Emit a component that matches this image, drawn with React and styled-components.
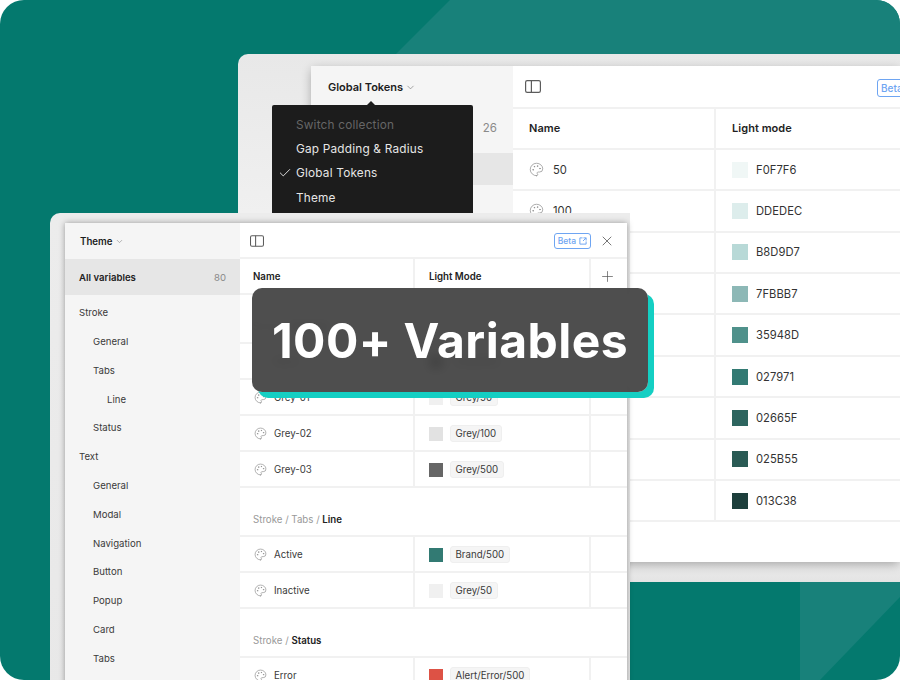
import React from "react";
import styled, { createGlobalStyle } from "styled-components";
import { Palette, ChevronDown, X, Plus, Check } from "lucide-react";

const Global = createGlobalStyle`
  html, body { margin: 0; padding: 0; background: #fff; }
  body { font-family: "Inter", "Liberation Sans", sans-serif; -webkit-font-smoothing: antialiased; }
  * { box-sizing: border-box; }
`;

const Hero = styled.div`
  position: relative; width: 900px; height: 680px; overflow: hidden;
  border-radius: 24px; background: #04796e;
`;
const Backdrop = styled.svg`position: absolute; inset: 0;`;

const BackWindow = styled.section`
  position: absolute; left: 238px; top: 54px; width: 662px; height: 528px;
  padding: 12px 0 20px 73px;
  border-radius: 10px 0 0 0;
  background-image: linear-gradient(to bottom, #e8e8e8, #f0f0f0 30%, #f0f0f0 94%, #e4e4e4);
`;
const BackPanel = styled.div`
  display: flex; height: 100%; background: #fff;
  box-shadow: 0 3px 10px -1px rgba(0,0,0,.32);
`;
const BackSide = styled.aside`
  width: 202px; flex: none; background: #f5f5f5;
`;
const SideHeader = styled.div`
  display: flex; align-items: center; gap: 2px;
  height: ${p => p.$h}px; padding-left: ${p => p.$pad}px;
  font-size: ${p => p.$size}px; font-weight: 600; color: #1c1c1c;
  svg { color: #777; margin-top: 1px; }
`;
const BackCountRow = styled.div`
  display: flex; justify-content: flex-end; align-items: center;
  height: 42px; padding-right: 16px; font-size: 11.5px; color: #8a8a8a;
`;
const BackSelected = styled.div`
  height: 32px; margin-top: 4px; background: #e6e6e6;
`;
const BackMain = styled.div`flex: 1; min-width: 0; overflow: hidden;`;
const TopBar = styled.div`
  display: flex; align-items: center; height: ${p => p.$h}px;
  padding: ${p => p.$top}px ${p => p.$right}px 0 ${p => p.$left}px;
  border-bottom: 2px solid #f1f1f1; color: #555;
`;
const Spacer = styled.div`flex: 1;`;

const BackBetaClip = styled.div`width: 23px; overflow: hidden; flex: none;`;
const Beta = styled.span`
  display: inline-flex; align-items: center; gap: 3px; flex: none;
  height: ${p => p.$h}px; padding: 0 3px; border: 1px solid #6ea5f2; border-radius: 3px;
  font-size: ${p => p.$size}px; font-weight: 500; color: #6ea5f2;
`;

const BackRow = styled.div`
  display: grid; grid-template-columns: 201px 1fr; height: 41.4px;
  border-bottom: 2px solid #f1f1f1;
  font-size: 11.2px; color: #333; letter-spacing: .05px;
`;
const BackCell = styled.div`
  display: flex; align-items: center; gap: 9px; padding-left: ${p => p.$pad}px;
  font-size: ${p => (p.$head ? "11px" : "inherit")};
  font-weight: ${p => (p.$head ? 600 : 400)}; color: ${p => (p.$head ? "#1f1f1f" : "#333")};
  & + & { border-left: 2px solid #f1f1f1; gap: 8px; }
  svg { color: #888; flex: none; }
`;
const Swatch = styled.span`
  width: ${p => p.$s}px; height: ${p => p.$s}px; flex: none; background: ${p => p.$c};
`;

const Menu = styled.div`
  position: absolute; left: 272px; top: 105px; width: 201px; height: 120px;
  padding-top: 7.5px; background: #1c1c1c; border-radius: 2px;
  font-size: 11.8px; letter-spacing: .2px; color: #e6e6e6;
  &::before {
    content: ""; position: absolute; left: 94px; top: -4px;
    border: 5px solid transparent; border-top: 0; border-bottom-color: #1c1c1c;
  }
`;
const MenuItem = styled.div`
  position: relative; display: flex; align-items: center; height: 24.3px; padding-left: 24px;
  color: ${p => (p.$muted ? "#666" : "#e6e6e6")};
  svg { position: absolute; left: 6px; top: 5px; }
`;

const FrontWindow = styled.section`
  position: absolute; left: 50px; top: 213px; width: 580px; height: 490px;
  padding: 10px 3px 0 15px; border-radius: 10px 0 0 0;
  background: linear-gradient(to bottom, #ececec, #e8e8e8);
`;
const FrontPanel = styled.div`
  display: flex; height: 100%; background: #fff;
  box-shadow: 0 0 6px rgba(0,0,0,.36);
`;
const FrontSide = styled.aside`
  width: 175px; flex: none; background: #f5f5f5; font-size: 9.6px; color: #3a3a3a;
`;
const AllRow = styled.div`
  display: flex; justify-content: space-between; align-items: center;
  height: 36px; padding: 0 14px; background: #e6e6e6;
  font-weight: 600; color: #222;
  span { font-weight: 400; color: #8a8a8a; }
`;
const Tree = styled.div`padding-top: 3.4px;`;
const TreeItem = styled.div`
  display: flex; align-items: center; height: 28.8px; padding-left: ${p => 14 + p.$level * 14}px;
`;
const FrontMain = styled.div`flex: 1; min-width: 0;`;
const FrontRow = styled.div`
  display: grid; grid-template-columns: 173px 176px 1fr; height: 36px;
  border-bottom: 2px solid #f1f1f1; font-size: 9.7px;
`;
const FrontCell = styled.div`
  display: flex; align-items: center; gap: 7px; padding-left: ${p => p.$pad}px;
  padding-top: ${p => (p.$head ? 0 : 1)}px;
  font-weight: ${p => (p.$head ? 600 : 400)}; color: ${p => (p.$head ? "#222" : "#3a3a3a")};
  & + & { border-left: 2px solid #f1f1f1; }
  svg { color: #888; flex: none; }
`;
const PlusCell = styled(FrontCell)`
  justify-content: center; padding: 0 3px 0 0; svg { color: #555; }
`;
const Chip = styled.span`
  display: inline-flex; align-items: center; height: 17px; padding: 0 4.5px;
  background: #f5f5f5; border: 1px solid #efefef; border-radius: 3px; color: #3a3a3a;
`;
const Section = styled.div`
  display: flex; align-items: flex-end; height: 49px; padding: 0 0 10px 13px;
  border-bottom: 2px solid #f1f1f1; font-size: 9.7px; color: #999;
  b { font-weight: 600; color: #222; white-space: pre; }
  span { white-space: pre; }
`;
const CloseIcon = styled(X)`margin-left: 8px; color: #444;`;

const Banner = styled.div`
  position: absolute; left: 252px; top: 288px; width: 396px; height: 104px;
  display: flex; align-items: center; justify-content: center;
  border-radius: 10px; background: rgba(68,68,68,.95);
  backdrop-filter: blur(5px);
  box-shadow: 6px 6px 0 #14cfc3;
  font-size: 48px; font-weight: 700; letter-spacing: .45px; color: #fff; white-space: nowrap;
`;

const PanelIcon = ({ w = 16, h = 13 }) => (
  <svg width={w} height={h} viewBox="0 0 16 13" fill="none" stroke="#5c5c5c" strokeWidth="1.2">
    <rect x=".6" y=".6" width="14.8" height="11.8" rx="1.6" />
    <path d="M6.4 .6v11.8" />
  </svg>
);
const OutIcon = () => (
  <svg width="8" height="8" viewBox="0 0 9 9" fill="none" stroke="#6ea5f2" strokeWidth="1.1">
    <path d="M4 1H1v7h7V5M5 1h3v3M8 1 4.5 4.5" />
  </svg>
);

const backRows = [
  ["50", "#f0f7f6", "F0F7F6"], ["100", "#ddedec", "DDEDEC"], ["200", "#b8d9d7", "B8D9D7"],
  ["300", "#8db8b6", "7FBBB7"], ["400", "#4f918b", "35948D"], ["500", "#327a73", "027971"],
  ["600", "#2d655f", "02665F"], ["700", "#2a5b55", "025B55"], ["800", "#1d3f3c", "013C38"],
];
const tree = [
  ["Stroke", 0], ["General", 1], ["Tabs", 1], ["Line", 2], ["Status", 1], ["Text", 0],
  ["General", 1], ["Modal", 1], ["Navigation", 1], ["Button", 1], ["Popup", 1], ["Card", 1], ["Tabs", 1],
];
const Row = ({ name, color, token }) => (
  <FrontRow>
    <FrontCell $pad={14}><Palette size={13} strokeWidth={1.2} />{name}</FrontCell>
    <FrontCell $pad={14}><Swatch $s={14} $c={color} /><Chip>{token}</Chip></FrontCell>
    <FrontCell />
  </FrontRow>
);
const Title = ({ path, leaf }) => (
  <Section><span>{path} / </span><b>{leaf}</b></Section>
);

export default function App() {
  return (
    <Hero>
      <Global />
      <Backdrop width="900" height="680" viewBox="0 0 900 680">
        <path d="M450 0H900V100H350Z" fill="#18817a" />
        <path d="M800 582H900V597L820 680H800Z" fill="#18817a" />
      </Backdrop>

      <BackWindow>
        <BackPanel>
          <BackSide>
            <SideHeader $h={41} $pad={17} $size={11}>Global Tokens <ChevronDown size={11} strokeWidth={1.4} /></SideHeader>
            <BackCountRow>26</BackCountRow>
            <BackSelected />
          </BackSide>
          <BackMain>
            <TopBar $h={42.5} $top={0} $left={12} $right={0}>
              <PanelIcon /><Spacer />
              <BackBetaClip><Beta $h={18} $size={10}>Beta <OutIcon /></Beta></BackBetaClip>
            </TopBar>
            <BackRow><BackCell $pad={16} $head>Name</BackCell><BackCell $pad={16} $head>Light mode</BackCell></BackRow>
            {backRows.map(([n, c, t]) => (
              <BackRow key={t}>
                <BackCell $pad={16}><Palette size={15} strokeWidth={1.1} />{n}</BackCell>
                <BackCell $pad={16}><Swatch $s={16} $c={c} />{t}</BackCell>
              </BackRow>
            ))}
          </BackMain>
        </BackPanel>
      </BackWindow>

      <Menu>
        <MenuItem $muted>Switch collection</MenuItem>
        <MenuItem>Gap Padding &amp; Radius</MenuItem>
        <MenuItem><Check size={14} strokeWidth={1.6} />Global Tokens</MenuItem>
        <MenuItem>Theme</MenuItem>
      </Menu>

      <FrontWindow>
        <FrontPanel>
          <FrontSide>
            <SideHeader $h={36} $pad={15} $size={9.7}>Theme <ChevronDown size={9} strokeWidth={1.4} /></SideHeader>
            <AllRow>All variables <span>80</span></AllRow>
            <Tree>{tree.map(([t, l], i) => <TreeItem key={i} $level={l}>{t}</TreeItem>)}</Tree>
          </FrontSide>
          <FrontMain>
            <TopBar $h={36} $top={2} $left={10} $right={12}>
              <PanelIcon w={14} h={12} /><Spacer />
              <Beta $h={16} $size={8.5}>Beta <OutIcon /></Beta>
              <CloseIcon size={16} strokeWidth={1.1} />
            </TopBar>
            <FrontRow>
              <FrontCell $pad={13} $head>Name</FrontCell>
              <FrontCell $pad={14} $head>Light Mode</FrontCell>
              <PlusCell $head><Plus size={17} strokeWidth={1} /></PlusCell>
            </FrontRow>
            <Title path="Stroke" leaf="General" />
            <Row name="Black" color="#3a3a3a" token="Grey/900" />
            <Row name="Grey-01" color="#f0f0f0" token="Grey/50" />
            <Row name="Grey-02" color="#e2e2e2" token="Grey/100" />
            <Row name="Grey-03" color="#666666" token="Grey/500" />
            <Title path="Stroke / Tabs" leaf="Line" />
            <Row name="Active" color="#327a73" token="Brand/500" />
            <Row name="Inactive" color="#f0f0f0" token="Grey/50" />
            <Title path="Stroke" leaf="Status" />
            <Row name="Error" color="#dd5245" token="Alert/Error/500" />
          </FrontMain>
        </FrontPanel>
      </FrontWindow>

      <Banner>100+ Variables</Banner>
    </Hero>
  );
}
